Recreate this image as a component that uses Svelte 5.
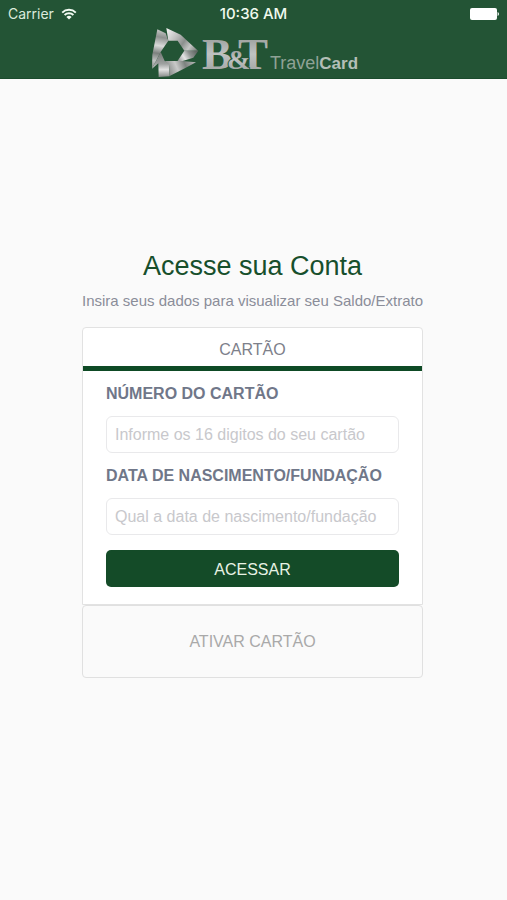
<script>
let cardNumber = "";
let birthDate = "";
let activeTab = "cartao";
</script>

<header class="header">
  <div class="status">
    <div class="status__carrier">
      <span>Carrier</span>
      <svg class="wifi" viewBox="0 0 16 12" aria-hidden="true">
        <path d="M1.2 4.6 A9.8 9.8 0 0 1 14.8 4.6" />
        <path d="M3.6 7 A6.4 6.4 0 0 1 12.4 7" />
        <path class="wifi__dot" d="M5.4 8.9 A3.8 3.8 0 0 1 10.6 8.9 L8 11.6 Z" />
      </svg>
    </div>
    <time class="status__time">10:36 AM</time>
    <svg class="battery" viewBox="0 0 29 12" aria-hidden="true">
      <rect width="27" height="12" rx="2" />
      <path d="M27.6 4 Q29 4.6 29 6 Q29 7.4 27.6 8 Z" />
    </svg>
  </div>

  <svg class="brand" viewBox="0 0 208 51" role="img" aria-label="B&T TravelCard">
    <defs>
      <linearGradient id="steelLeft" gradientUnits="userSpaceOnUse" x1="40" y1="16" x2="20" y2="132">
        <stop offset="0" stop-color="#c9cac9" />
        <stop offset="0.2" stop-color="#8d918f" />
        <stop offset="0.42" stop-color="#d9dad9" />
        <stop offset="0.62" stop-color="#7b807d" />
        <stop offset="0.82" stop-color="#c2c4c3" />
        <stop offset="1" stop-color="#8a8e8c" />
      </linearGradient>
      <linearGradient id="steelTop" gradientUnits="userSpaceOnUse" x1="56" y1="20" x2="148" y2="84">
        <stop offset="0" stop-color="#efefef" />
        <stop offset="0.3" stop-color="#bfc0bf" />
        <stop offset="0.55" stop-color="#8b8f8d" />
        <stop offset="0.75" stop-color="#c5c6c5" />
        <stop offset="1" stop-color="#6f7471" />
      </linearGradient>
      <linearGradient id="steelRight" gradientUnits="userSpaceOnUse" x1="146" y1="80" x2="92" y2="116">
        <stop offset="0" stop-color="#5b625e" />
        <stop offset="0.35" stop-color="#8e9290" />
        <stop offset="0.65" stop-color="#e4e4e4" />
        <stop offset="1" stop-color="#8b8f8d" />
      </linearGradient>
      <linearGradient id="steelBottom" gradientUnits="userSpaceOnUse" x1="142" y1="116" x2="62" y2="150">
        <stop offset="0" stop-color="#b5b7b6" />
        <stop offset="0.35" stop-color="#7d827f" />
        <stop offset="0.65" stop-color="#c8c9c8" />
        <stop offset="1" stop-color="#858987" />
      </linearGradient>
      <linearGradient id="steelFoot" gradientUnits="userSpaceOnUse" x1="46" y1="88" x2="46" y2="158">
        <stop offset="0" stop-color="#777c79" />
        <stop offset="0.45" stop-color="#9ea1a0" />
        <stop offset="0.7" stop-color="#e2e2e2" />
        <stop offset="1" stop-color="#8a8e8c" />
      </linearGradient>
      <linearGradient id="letters" x1="0" y1="0" x2="0" y2="1">
        <stop offset="0" stop-color="#8b908d" />
        <stop offset="0.5" stop-color="#c0c2c1" />
        <stop offset="1" stop-color="#979b99" />
      </linearGradient>
    </defs>
    <g transform="translate(-2 -3) scale(0.3333)">
      <path fill="url(#steelLeft)" d="M28 16 L53 28 L61 50 L38 84 L12 134 L13 92 Z" />
      <path fill="url(#steelTop)" d="M55 12 L98 32 L150 80 L109 80 L89 50 L61 50 Z" />
      <path fill="url(#steelRight)" d="M109 80 L151 80 L136 101 L104 111 L88 112 Z" />
      <path fill="url(#steelFoot)" d="M38 84 L50 111 L63 118 L65 157 L32 159 L31 118 L12 134 Z" />
      <path fill="url(#steelBottom)" d="M50 111 L104 111 L144 115 L112 132 L65 156 L63 122 Z" />
    </g>
    <g class="brand__letters" fill="url(#letters)">
      <text x="52" y="42" font-size="45">B</text>
      <text x="88" y="42" font-size="45">T</text>
      <text class="brand__amp" x="77" y="42" font-size="28">&amp;</text>
    </g>
    <text class="brand__name" x="120" y="42"><tspan class="brand__travel">Travel</tspan><tspan class="brand__card">Card</tspan></text>
  </svg>
</header>

<main class="page">
  <h1 class="title">Acesse sua Conta</h1>
  <p class="subtitle">Insira seus dados para visualizar seu Saldo/Extrato</p>

  <form class="card" on:submit|preventDefault>
    <button type="button" class="tab {activeTab === 'cartao' ? 'tab--active' : ''}" on:click={() => activeTab = "cartao"}>CARTÃO</button>
    <div class="fields">
      <label class="label" for="number">NÚMERO DO CARTÃO</label>
      <input class="input" id="number" type="text" inputmode="numeric" placeholder="Informe os 16 digitos do seu cartão" bind:value={cardNumber} />
      <label class="label" for="birth">DATA DE NASCIMENTO/FUNDAÇÃO</label>
      <input class="input" id="birth" type="text" placeholder="Qual a data de nascimento/fundação" bind:value={birthDate} />
      <button type="submit" class="submit">ACESSAR</button>
    </div>
  </form>
  <button type="button" class="activate">ATIVAR CARTÃO</button>
</main>

<style>
:global(body) {
  background: #fafafa;
  font-family: "Liberation Sans", Arial, sans-serif;
}

.header {
  box-sizing: border-box;
  height: 79px;
  background: #235435;
  border-bottom: 1px solid #1b4b2d;
  color: #f0faee;
}

.status {
  display: grid;
  grid-template-columns: 1fr auto 1fr;
  align-items: center;
  height: 27px;
  padding: 0 8px;
  font-family: Inter, sans-serif;
  font-size: 14px;
}

.status__carrier {
  display: flex;
  align-items: center;
  gap: 7px;
  color: #dcebdc;
}

.status__time {
  font-size: 15px;
  font-weight: 500;
}

.wifi {
  width: 16px;
  height: 12px;
  fill: none;
  stroke: #f2fbf2;
  stroke-width: 2;
}

.wifi__dot {
  fill: #f2fbf2;
  stroke: none;
}

.battery {
  justify-self: end;
  width: 29px;
  height: 12px;
  fill: #fff;
}

.brand {
  display: block;
  width: 208px;
  height: 51px;
  margin: 0 auto;
}

.brand__letters {
  font-family: "Liberation Serif", serif;
  font-weight: 700;
}

.brand__amp {
  stroke: #235435;
  stroke-width: 2;
  paint-order: stroke;
}

.brand__name {
  font-family: "Liberation Sans", Arial, sans-serif;
}

.brand__travel {
  fill: #8fa296;
  font-size: 18px;
}

.brand__card {
  fill: #b3bfb7;
  font-size: 17px;
  font-weight: 700;
}

.page {
  padding: 170px 84px 32px 82px;
}

.title {
  margin: 0 0 8px;
  color: #174f2c;
  font-size: 27px;
  font-weight: 400;
  line-height: 34px;
  text-align: center;
}

.subtitle {
  margin: 0 0 16px;
  color: #8a8d99;
  font-size: 15px;
  line-height: 20px;
  text-align: center;
  white-space: nowrap;
}

.card {
  background: #fff;
  border: 1px solid #e2e2e2;
  border-radius: 4px 4px 0 0;
}

.tab {
  display: block;
  width: 100%;
  height: 43px;
  padding: 6px 0 0;
  border: 0;
  border-bottom: 5px solid transparent;
  background: none;
  color: #7d808a;
  font: 16px/20px "Liberation Sans", Arial, sans-serif;
}

.tab--active {
  border-bottom-color: #0e4a25;
}

.fields {
  padding: 0 23px 17px;
}

.label {
  display: block;
  padding: 13px 0 12px;
  color: #707789;
  font-size: 16px;
  font-weight: 700;
  line-height: 20px;
  white-space: nowrap;
}

.input {
  display: block;
  box-sizing: border-box;
  width: 100%;
  height: 37px;
  padding: 0 8px;
  border: 1px solid #e9e9eb;
  border-radius: 6px;
  background: #fff;
  color: #555;
  font: 16px "Liberation Sans", Arial, sans-serif;
}

.input::placeholder {
  color: #c8c8cc;
  opacity: 1;
}

.submit {
  display: block;
  width: 100%;
  height: 37px;
  margin-top: 15px;
  padding: 2px 0 0;
  border: 0;
  border-radius: 5px;
  background: #144b28;
  color: #e8f2e4;
  font: 16px "Liberation Sans", Arial, sans-serif;
}

.activate {
  display: block;
  width: 100%;
  height: 73px;
  padding: 0;
  border: 1px solid #e0e0e0;
  border-radius: 4px;
  background: #fafafa;
  color: #a9a9a9;
  font: 16px "Liberation Sans", Arial, sans-serif;
}
</style>
